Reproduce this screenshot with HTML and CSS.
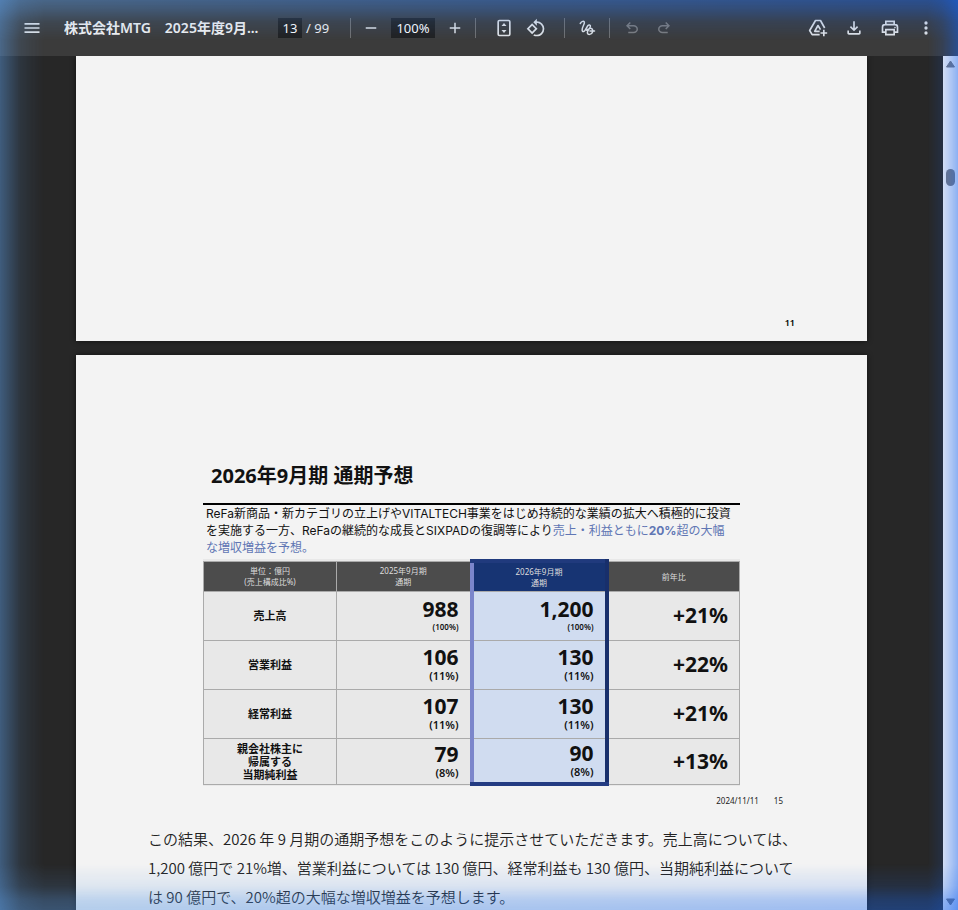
FILE: index.html
```html
<!DOCTYPE html>
<html lang="ja">
<head>
<meta charset="utf-8">
<meta name="viewport" content="width=device-width, initial-scale=1">
<title>株式会社MTG 2025年度9月期</title>
<link rel="stylesheet" href="styles.css">
</head>
<body>
<header class="toolbar">
  <button class="tool" aria-label="メニュー"><svg viewBox="0 0 24 24"><path fill="currentColor" d="M3 18h18v-2H3zm0-5h18v-2H3zm0-7v2h18V6z"/></svg></button>
  <h1 class="doc-title">株式会社MTG　2025年度9月...</h1>
  <div class="pager"><input class="field page-field" aria-label="ページ番号" value="13"><span>/ 99</span></div>
  <span class="rule"></span>
  <div class="group zoom">
    <button class="tool" aria-label="縮小"><svg viewBox="0 0 24 24"><path fill="currentColor" d="M5 11h14v2H5z"/></svg></button>
    <input class="field zoom-field" aria-label="ズーム" value="100%">
    <button class="tool" aria-label="拡大"><svg viewBox="0 0 24 24"><path fill="currentColor" d="M19 13h-6v6h-2v-6H5v-2h6V5h2v6h6z"/></svg></button>
  </div>
  <span class="rule"></span>
  <div class="group view">
    <button class="tool" aria-label="ページに合わせる"><svg viewBox="0 0 24 24" fill="none" stroke="currentColor" stroke-width="2"><rect x="5" y="3" width="14" height="18" rx="1.5"/><path fill="currentColor" stroke="none" d="M12 6l3 3.500H9zM12 18l3-3.500H9z"/></svg></button>
    <button class="tool" aria-label="回転"><svg viewBox="0 0 24 24"><path fill="currentColor" d="M7.340 6.410L.860 12.900l6.490 6.480 6.490-6.480zM3.690 12.900l3.660-3.660L11 12.900l-3.660 3.660zm15.670-6.260A8.950 8.950 0 0 0 13 4V.760L8.760 5 13 9.240V6c1.790 0 3.580.680 4.950 2.050a7.007 7.007 0 0 1 0 9.900 6.973 6.973 0 0 1-7.790 1.440l-1.490 1.490C10.020 21.620 11.510 22 13 22c2.300 0 4.610-.880 6.360-2.640a8.980 8.980 0 0 0 0-12.720z"/></svg></button>
  </div>
  <span class="rule"></span>
  <div class="group draw">
    <button class="tool" aria-label="描画"><svg viewBox="0 0 24 24" fill="none" stroke="currentColor" stroke-width="2" stroke-linecap="round"><path d="M3 6C5 3 8 2 8.500 4.500 9 7 5 11 5.500 15c.5 3 3 2 4.500-1l3-5c1.500-2 4-1 3.500 1-.5 3-4 5-4 8 0 4 6 3 7-1 .7-3-1-5-4-4.500-2 .5-3 1.500-4 2.500M16 16h6"/></svg></button>
  </div>
  <span class="rule"></span>
  <div class="group draw">
    <button class="tool" disabled aria-label="元に戻す"><svg viewBox="0 0 24 24"><path fill="currentColor" d="M7 19v-2h7.100q1.575 0 2.738-1T18 13.500 16.838 11 14.100 10H7.800l2.600 2.600L9 14 4 9l5-5 1.400 1.400L7.800 8h6.300q2.425 0 4.163 1.575T20 13.500t-1.737 3.925T14.100 19z"/></svg></button>
    <button class="tool" disabled aria-label="やり直す"><svg viewBox="0 0 24 24"><path fill="currentColor" d="M9.900 19q-2.425 0-4.162-1.575T4 13.500t1.738-3.925T9.900 8h6.300l-2.600-2.600L15 4l5 5-5 5-1.400-1.400 2.600-2.600H9.900q-1.575 0-2.737 1T6 13.500 7.163 16 9.900 17H17v2z"/></svg></button>
  </div>
  <div class="actions">
    <button class="tool" aria-label="ドライブに保存"><svg viewBox="0 0 24 24" fill="none" stroke="currentColor" stroke-width="2" stroke-linejoin="round"><path d="M14 20H5l-3-5L9 3h6l5 9M14 16H8l4-7 3 5M19 14v8M15 18h8"/></svg></button>
    <button class="tool" aria-label="ダウンロード"><svg viewBox="0 0 24 24"><path fill="currentColor" d="M12 16l-5-5 1.400-1.450 2.600 2.600V4h2v8.150l2.600-2.600L17 11zm-6 4q-.825 0-1.413-.587T4 18v-3h2v3h12v-3h2v3q0 .825-.587 1.413T18 20z"/></svg></button>
    <button class="tool" aria-label="印刷"><svg viewBox="0 0 24 24" fill="none" stroke="currentColor" stroke-width="2"><path d="M7 8V4h10v4M7 17H3v-6q0-3 3-3h12q3 0 3 3v6h-4M7 14h10v6H7z"/><circle cx="18" cy="11.500" r="1" fill="currentColor" stroke="none"/></svg></button>
    <button class="tool" aria-label="その他"><svg viewBox="0 0 24 24" fill="currentColor"><circle cx="12" cy="6" r="2"/><circle cx="12" cy="12" r="2"/><circle cx="12" cy="18" r="2"/></svg></button>
  </div>
</header>
<div class="viewer">
  <main class="pages">
    <section class="page previous"><span>11</span></section>
    <section class="page current">
      <article class="slide">
        <h2>2026年9月期 通期予想</h2>
        <p class="lead">ReFa新商品・新カテゴリの立上げやVITALTECH事業をはじめ持続的な業績の拡大へ積極的に投資<br>を実施する一方、ReFaの継続的な成長とSIXPADの復調等により<em>売上・利益ともに<b>20%</b>超の大幅<br>な増収増益を予想。</em></p>
        <table>
          <colgroup><col class="c-name"><col class="c-year"><col class="c-year"><col class="c-name"></colgroup>
          <thead><tr><th>単位：億円<br>(売上構成比%)</th><th>2025年9月期<br>通期</th><th class="focus">2026年9月期<br>通期</th><th>前年比</th></tr></thead>
          <tbody>
            <tr><th>売上高</th><td>988<small class="full">(100%)</small></td><td class="focus">1,200<small class="full">(100%)</small></td><td>+21%</td></tr>
            <tr><th>営業利益</th><td>106<small>(11%)</small></td><td class="focus">130<small>(11%)</small></td><td>+22%</td></tr>
            <tr><th>経常利益</th><td>107<small>(11%)</small></td><td class="focus">130<small>(11%)</small></td><td>+21%</td></tr>
            <tr class="last"><th>親会社株主に<br>帰属する<br>当期純利益</th><td>79<small>(8%)</small></td><td class="focus">90<small>(8%)</small></td><td>+13%</td></tr>
          </tbody>
        </table>
      </article>
      <footer class="stamp"><span>2024/11/11</span><span>15</span></footer>
      <p class="speech">この結果、2026 年 9 月期の通期予想をこのように提示させていただきます。売上高については、<br>1,200 億円で 21%増、営業利益については 130 億円、経常利益も 130 億円、当期純利益について<br>は 90 億円で、20%超の大幅な増収増益を予想します。</p>
    </section>
  </main>
  <div class="scrollbar" aria-hidden="true">
    <svg viewBox="0 0 9 8"><path d="M4.500 1L8.500 7H.500z"/></svg>
    <span class="thumb"></span>
    <svg class="down" viewBox="0 0 9 8"><path d="M.500 1h8l-4 6z"/></svg>
  </div>
</div>
<div class="glow"></div>
</body>
</html>
```
FILE: styles.css
```css
* { box-sizing: border-box; }
body {
  margin: 0;
  height: 100vh;
  display: flex;
  flex-direction: column;
  overflow: hidden;
  background: #272727;
  font-family: "Noto Sans", "Noto Sans CJK JP", sans-serif;
}

.toolbar {
  flex: none;
  height: 56px;
  padding: 0 14px 0 16px;
  display: flex;
  align-items: center;
  background: #3b3b3b;
  color: #f1f1f1;
  font-size: 14px;
}
.tool {
  width: 32px;
  height: 32px;
  padding: 0;
  border: 0;
  display: grid;
  place-items: center;
  background: none;
  color: #e1e3e6;
}
.tool:disabled { color: #7c7c7c; }
.tool svg { width: 20px; height: 20px; }
.zoom svg, .draw svg { width: 18px; height: 18px; }
.doc-title {
  width: 200px;
  margin: 0 14px 0 16px;
  overflow: hidden;
  white-space: nowrap;
  text-overflow: ellipsis;
  font-size: 14px;
  font-weight: 600;
  line-height: 24px;
}
.pager { display: flex; gap: 4px; width: 72px; align-items: center; white-space: nowrap; }
.field {
  height: 20px;
  padding: 0;
  border: 0;
  background: #202020;
  color: #fff;
  font: inherit;
  font-size: 13px;
  text-align: center;
}
.pager span { font-size: 13px; }
.page-field { width: 24px; }
.zoom-field { width: 44px; }
.rule { width: 1px; height: 20px; background: #707070; }
.group { display: flex; align-items: center; }
.zoom { gap: 4px; padding: 0 4px; }
.view { padding: 0 12px; }
.draw { padding: 0 6px; }
.actions { display: flex; margin-left: auto; }
.actions .tool { width: 36px; }

.viewer { flex: 1; min-height: 0; display: flex; }
.pages { flex: 1; min-width: 0; padding: 0 76px; overflow: hidden; }
.page { background: #f3f3f3; box-shadow: 0 0 5px #111; }
.previous {
  height: 285px;
  margin-bottom: 14px;
  padding: 0 72px 10px 0;
  display: flex;
  align-items: flex-end;
  justify-content: flex-end;
  font-size: 9px;
  font-weight: 600;
  line-height: 16px;
}
.current { height: 1120px; padding: 106px 72px 0; color: #222; }
.slide { margin: 0 55px; color: #111; }
.slide h2 {
  margin: 0;
  padding: 0 8px 12px;
  border-bottom: 2px solid #000;
  font-size: 20px;
  line-height: 30px;
}
.lead {
  margin: 0 0 3px;
  padding: 0 3px;
  font-family: Inter, "Noto Sans CJK JP", sans-serif;
  font-size: 12px;
  line-height: 17px;
  white-space: nowrap;
}
.lead em { font-style: normal; color: #6076b4; }

table {
  width: 100%;
  table-layout: fixed;
  border-collapse: collapse;
  background: #e8e8e8;
}
.c-name { width: 133px; }
.c-year { width: 135px; }
th, td { padding: 0; border: 1px solid #aaa; }
thead th {
  height: 30px;
  background: #4c4c4c;
  color: #ddd;
  font-size: 8px;
  font-weight: 400;
  line-height: 11px;
}
tbody tr { height: 49px; }
tbody .last { height: 46px; }
tbody th { font-size: 11px; line-height: 13px; }
td {
  padding-right: 11px;
  text-align: right;
  font-size: 21px;
  font-weight: 700;
  line-height: 23px;
}
small { display: block; font-size: 11px; font-weight: 600; line-height: 14px; }
small.full { font-size: 8px; line-height: 12px; }
.focus {
  border-right: 4px solid #182f6b;
  border-left: 4px solid #7b86cb;
  background: #d0dcf0;
}
thead .focus { border-top: 4px solid #203a7d; background: #173473; }
.last .focus { border-bottom: 4px solid #233b82; }

.stamp {
  display: flex;
  justify-content: flex-end;
  gap: 15px;
  padding: 8px 12px 0 0;
  font-size: 8px;
  line-height: 14px;
}
.speech {
  margin: 16px 0 0;
  font-size: 15px;
  line-height: 29px;
  white-space: nowrap;
  font-family: "Noto Sans CJK JP", sans-serif;
  font-weight: 350;
}

.scrollbar {
  width: 15px;
  padding: 4px 3px;
  display: flex;
  flex-direction: column;
  background: #f3f3f6;
}
.scrollbar svg { width: 9px; height: 8px; fill: #77777c; stroke: #77777c; stroke-linejoin: round; }
.thumb { width: 9px; height: 17px; margin-top: 101px; border-radius: 5px; background: #77777c; }
.scrollbar .down { margin-top: auto; }

.glow {
  position: absolute;
  inset: 0;
  pointer-events: none;
  background: linear-gradient(to right, #5b9ae0, #1664ee);
  mask-image:
    linear-gradient(to right, #0007, #0005 8px, #0002 20px, #0001 30px, transparent 44px),
    linear-gradient(to left, #0007, #0004 9px, #0002 16px, transparent 30px),
    linear-gradient(to bottom, #0007, #0005 10px, #0002 22px, transparent 40px),
    linear-gradient(to top, #0006, #0005 10px, #0002 24px, transparent 46px);
}
```
